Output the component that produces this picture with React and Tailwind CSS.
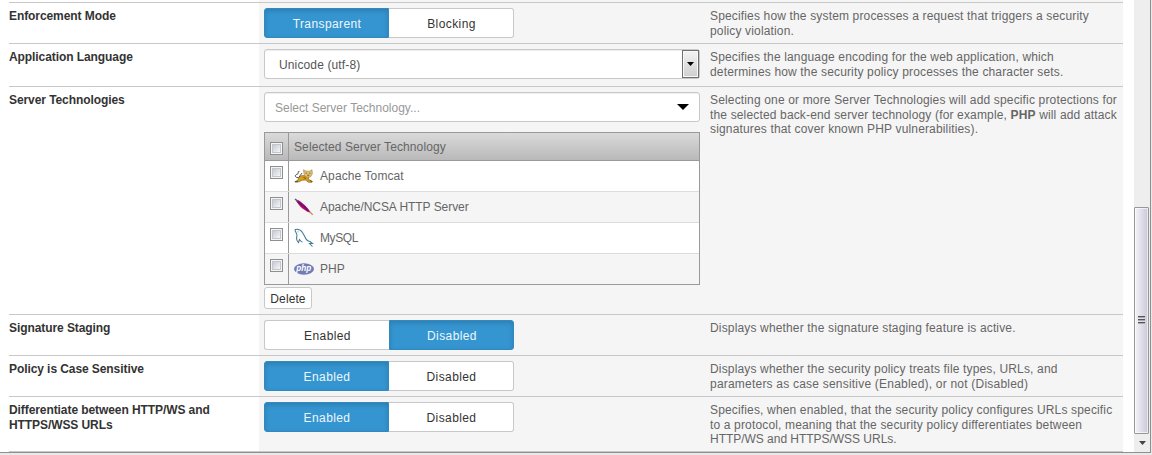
import React from "react";

function Row({ h, label, children, help }) {
  return (
    <div className={`flex ${h} border-t border-[#c8c8c8]`}>
      <div className="w-[250px] shrink-0 pt-[6px] font-bold text-[#333] leading-[14.6px] tracking-[-0.08px] whitespace-nowrap">
        {label.map((l) => (
          <div key={l}>{l}</div>
        ))}
      </div>
      <div className="w-[446px] shrink-0 bg-[#f5f5f5] pl-[5px] pt-[5px]">{children}</div>
      <div className="flex-1 bg-[#f5f5f5] pl-[5px] pt-[6px] text-[#666] leading-[14.6px] tracking-[0.155px] whitespace-nowrap">
        {help}
      </div>
    </div>
  );
}

function Toggle({ left, right, on }) {
  const active = "bg-[#3595d0] border-[#3189c2] text-[#eef7fd] shadow-[inset_0_2px_5px_rgba(0,0,0,0.16)]";
  const idle = "bg-white border-[#c8c8c8] text-[#333]";
  return (
    <div className="flex h-[30px] w-[250px] tracking-[0.4px]">
      <div className={`flex w-[125px] items-center justify-center rounded-l-[3px] border pt-[2px] pl-px ${on === 0 ? active : idle + " border-r-0"}`}>{left}</div>
      <div className={`flex w-[125px] items-center justify-center rounded-r-[3px] border pt-[2px] pl-px ${on === 1 ? active : idle + " border-l-0"}`}>{right}</div>
    </div>
  );
}

function Check() {
  return (
    <div className="h-[13px] w-[13px] border border-[#8e8f8f] bg-[#f4f4f4] p-[1px]">
      <div className="h-full w-full border border-[#c3c6cf] bg-linear-to-br from-[#c6cad2] to-[#f6f6f6]" />
    </div>
  );
}

const tomcat = (
  <svg width="20" height="14" viewBox="0 0 20 14">
    <path d="M4.500 8.500 8 6.500 13 7 15 8.500 14 10 18.500 12.500 18 13.300H14.500L11.500 11 8 11.300 5 12.800H.8L4 11Z" fill="#d59d1c" stroke="#7a5a14" strokeWidth=".6" />
    <path d="M9.500.8 12 2.200H15.500L18 .8 18.300 5 16.500 7.800 13 8.300 10.300 6.500Z" fill="#dfc176" stroke="#a08038" strokeWidth=".6" />
    <path d="M4.500 8.500C1 9 .3 6 3 5.300 5.500 4.800 3 2 5.500 2.300M5 8.200 8 4M1 12.800H4" fill="none" stroke="#3d3d3a" strokeWidth=".9" />
    <path d="M11.800 4.200h1.200M15.200 4.200h1.200M13.300 6.300h2M9.500 8.500l2.500 1M16 11.500l2 1" stroke="#5b451a" strokeWidth=".8" />
  </svg>
);

const feather = (
  <svg width="20" height="18" viewBox="0 0 20 18">
    <path d="M1.500 1.500 5 2.500C9 5 13 9 16.500 14L15.500 14.500C10 12.500 5 8.500 1.500 1.500Z" fill="#c8104a" />
    <path d="M3 3C7 6 11 9 14.500 13" fill="none" stroke="#65108f" strokeWidth="1.800" />
    <path d="M1 1 4 3.500" stroke="#605a5e" strokeWidth="1.500" />
    <path d="M15.500 13.800 18.800 16.800" stroke="#c98d5a" strokeWidth="1.300" />
  </svg>
);

const dolphin = (
  <svg width="20" height="20" viewBox="0 0 20 20" fill="none" stroke="#457a94" strokeWidth="1.050">
    <path d="M1 1.500C4 .8 7 2 8.500 4.500L11 9C12 12 13.500 13 16 13.500L18.500 15.500 15.500 15.500 18.500 18.500" />
    <path d="M1 1.500C.8 4 3 5 3 7.500 2.300 10 2.800 13 4.500 14.500L5.500 11.500C6.500 12.500 7 14 8.500 14" />
    <path d="M4 3.500v.8" />
  </svg>
);

const php = (
  <svg width="20" height="12" viewBox="0 0 20 12">
    <ellipse cx="10" cy="6" rx="10" ry="5.700" fill="#727bb8" />
    <text x="9.800" y="8.300" textAnchor="middle" textLength="15" lengthAdjust="spacingAndGlyphs" fontFamily="Liberation Sans, sans-serif" fontSize="9" fontWeight="bold" fontStyle="italic" fill="#fff">php</text>
  </svg>
);

const items = [
  { name: "Apache Tomcat", icon: tomcat, box: "h-[31px] bg-white border-b border-[#dcdcdc]", track: "tracking-[0.1px]" },
  { name: "Apache/NCSA HTTP Server", icon: feather, box: "h-[31px] bg-[#f5f5f5] border-b border-[#dcdcdc]", track: "tracking-[-0.05px]" },
  { name: "MySQL", icon: dolphin, box: "h-[31px] bg-white border-b border-[#dcdcdc]", track: "tracking-[-0.4px]" },
  { name: "PHP", icon: php, box: "h-[30px] bg-[#f5f5f5]", track: "tracking-[0px]" },
];

function TechTable() {
  return (
    <div className="mt-[10px] w-[436px] border border-[#999] text-[#666]">
      <div className="flex h-[28px] border-b border-[#999] bg-linear-to-b from-[#dadada] to-[#b9b9b9]">
        <div className="w-[24px] border-r border-[#999] pl-[5px] pt-[9px]"><Check /></div>
        <div className="pl-[5px] pt-[6px] leading-[16px] tracking-[0.1px]">Selected Server Technology</div>
      </div>
      {items.map((it) => (
        <div key={it.name} className={`flex ${it.box}`}>
          <div className="w-[24px] border-r border-[#999] pl-[5px] pt-[5px]"><Check /></div>
          <div className="flex items-center pl-[5px]">
            <div className="flex w-[26px] items-center">{it.icon}</div>
            <div className={`leading-[16px] ${it.track}`}>{it.name}</div>
          </div>
        </div>
      ))}
    </div>
  );
}

function Lines({ lines }) {
  return lines.map((l, i) => <div key={i}>{l}</div>);
}

export default function App() {
  return (
    <div className="flex h-[455px] w-[1152px] flex-col overflow-hidden bg-[#e9e9e9] text-[12px] [font-family:'Liberation_Sans',Arial,sans-serif]">
      <div className="flex h-[453px] w-[1151px] border-b border-r border-[#8f8f8f] bg-white">
        <div className="ml-[9px] flex w-[1114px] shrink-0 flex-col">
          <div className="flex h-[2px] shrink-0"><div className="w-[250px]" /><div className="flex-1 bg-[#f5f5f5]" /></div>
          <Row h="h-[41px]" label={["Enforcement Mode"]} help={<Lines lines={["Specifies how the system processes a request that triggers a security", "policy violation."]} />}>
            <Toggle left="Transparent" right="Blocking" on={0} />
          </Row>
          <Row h="h-[43px]" label={["Application Language"]} help={<Lines lines={["Specifies the language encoding for the web application, which", "determines how the security policy processes the character sets."]} />}>
            <div className="flex h-[30px] w-[436px] items-center justify-between rounded-[3px] border border-[#c8c8c8] bg-white pl-[14px] text-[#555] shadow-[inset_0_1px_1px_rgba(0,0,0,0.07)]">
              <span className="pt-[2px] tracking-[0.13px]">Unicode (utf-8)</span>
              <div className="flex h-[28px] w-[17px] items-center justify-center border border-[#707070] bg-linear-to-b from-[#f3f3f3] to-[#cfcfcf] shadow-[inset_0_0_0_1px_#f8f8f8]">
                <svg width="7" height="4" viewBox="0 0 7 4"><path d="M0 0h7L3.500 4Z" fill="#000" /></svg>
              </div>
            </div>
          </Row>
          <Row h="h-[228px]" label={["Server Technologies"]} help={<Lines lines={["Selecting one or more Server Technologies will add specific protections for", <>the selected back-end server technology (for example, <b>PHP</b> will add attack</>, "signatures that cover known PHP vulnerabilities)."]} />}>
            <div className="flex h-[30px] w-[436px] items-center justify-between rounded-[3px] border border-[#c8c8c8] bg-white pl-[10px] pr-[10px] text-[#999] shadow-[inset_0_1px_1px_rgba(0,0,0,0.07)]">
              <span className="pt-[2px]">Select Server Technology...</span>
              <svg width="12" height="6" viewBox="0 0 12 6"><path d="M0 0h12L6 6Z" fill="#000" /></svg>
            </div>
            <TechTable />
            <div className="mt-[2px] flex h-[22px] w-[48px] items-center justify-center rounded-[3px] border border-[#c8c8c8] bg-white pt-[2px] tracking-[0.1px] text-[#333]">Delete</div>
          </Row>
          <Row h="h-[41px]" label={["Signature Staging"]} help="Displays whether the signature staging feature is active.">
            <Toggle left="Enabled" right="Disabled" on={1} />
          </Row>
          <Row h="h-[41px]" label={["Policy is Case Sensitive"]} help={<Lines lines={["Displays whether the security policy treats file types, URLs, and", <span className="tracking-[0.21px]">parameters as case sensitive (Enabled), or not (Disabled)</span>]} />}>
            <Toggle left="Enabled" right="Disabled" on={0} />
          </Row>
          <Row h="h-[55px]" label={["Differentiate between HTTP/WS and", "HTTPS/WSS URLs"]} help={<Lines lines={["Specifies, when enabled, that the security policy configures URLs specific", "to a protocol, meaning that the security policy differentiates between", <span className="tracking-[-0.03px]">HTTP/WS and HTTPS/WSS URLs.</span>]} />}>
            <Toggle left="Enabled" right="Disabled" on={0} />
          </Row>
          <div className="h-px shrink-0 bg-[#c8c8c8]" />
        </div>
        <div className="ml-[11px] flex w-[16px] shrink-0 flex-col bg-[#eeeeee]">
          <div className="h-[207px]" />
          <div className="flex h-[227px] w-[15px] items-center justify-center rounded-[1px] border border-[#979797] bg-linear-to-r from-[#f4f4f9] to-[#cbc8d8] shadow-[inset_0_0_0_1px_rgba(255,255,255,0.6)]">
            <svg width="7" height="9" viewBox="0 0 7 9"><path d="M0 .5h7M0 3.500h7M0 6.500h7" stroke="#555" /><path d="M0 1.500h7M0 4.500h7M0 7.500h7" stroke="#aaa" /></svg>
          </div>
          <div className="flex w-[16px] flex-1 items-center justify-center">
            <svg width="7" height="4" viewBox="0 0 7 4"><path d="M0 0h7L3.500 4Z" fill="#444" /></svg>
          </div>
        </div>
      </div>
    </div>
  );
}
